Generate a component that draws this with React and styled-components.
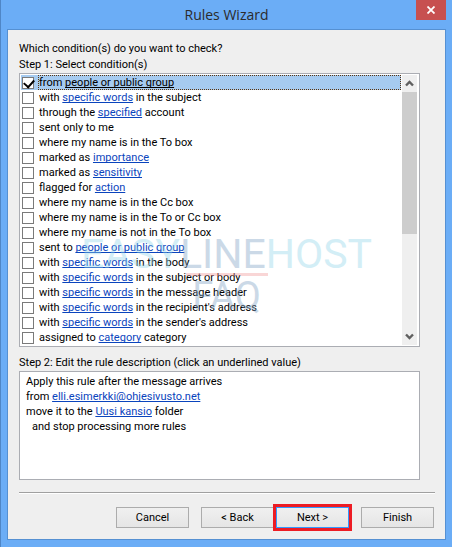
import React, { useState } from 'react'
import styled, { createGlobalStyle } from 'styled-components'

const conditions = [
    ['from ', 'people or public group', ''],
    ['with ', 'specific words', ' in the subject'],
    ['through the ', 'specified', ' account'],
    ['sent only to me'],
    ['where my name is in the To box'],
    ['marked as ', 'importance', ''],
    ['marked as ', 'sensitivity', ''],
    ['flagged for ', 'action', ''],
    ['where my name is in the Cc box'],
    ['where my name is in the To or Cc box'],
    ['where my name is not in the To box'],
    ['sent to ', 'people or public group', ''],
    ['with ', 'specific words', ' in the body'],
    ['with ', 'specific words', ' in the subject or body'],
    ['with ', 'specific words', ' in the message header'],
    ['with ', 'specific words', " in the recipient's address"],
    ['with ', 'specific words', " in the sender's address"],
    ['assigned to ', 'category', ' category'],
];

const App = () => {

    const [checked, setChecked] = useState([0]);

    const toggle = (index) => {
        if(checked.includes(index)) {
            setChecked(checked.filter((i) => i !== index));
        } else {
            setChecked([...checked, index]);
        }
    }

    return (
        <>
            <GlobalStyle />
            <Window>
                <TitleBar>
                    <Title>Rules Wizard</Title>
                    <CloseButton type="button" aria-label="Close">
                        <svg width="8" height="8" viewBox="0 0 8 8">
                            <path d="M0.5 0.5L7.5 7.5M7.5 0.5L0.5 7.5" stroke="#fff" strokeWidth="1.8" />
                        </svg>
                    </CloseButton>
                </TitleBar>
                <Panel>
                    <Fields>
                        <Label>Which condition(s) do you want to check?</Label>
                        <Label>Step 1: Select condition(s)</Label>
                        <ListBox>
                            <List>
                                {conditions.map(([before, link, after], index) => (
                                    <Row key={index} $selected={index === 0}>
                                        <Check
                                            type="checkbox"
                                            id={`condition-${index}`}
                                            checked={checked.includes(index)}
                                            onChange={() => toggle(index)}
                                        />
                                        <RowLabel htmlFor={`condition-${index}`} $selected={index === 0}>
                                            {before}
                                            {link && <Link href="#" $selected={index === 0}>{link}</Link>}
                                            {after}
                                        </RowLabel>
                                    </Row>
                                ))}
                            </List>
                            <ScrollBar>
                                <ScrollButton type="button" aria-label="Scroll up">
                                    <svg width="9" height="7" viewBox="0 0 9 7">
                                        <path d="M1 5.5L4.5 2L8 5.5" fill="none" stroke="#606060" strokeWidth="2.4" />
                                    </svg>
                                </ScrollButton>
                                <Track>
                                    <Thumb />
                                </Track>
                                <ScrollButton type="button" aria-label="Scroll down">
                                    <svg width="9" height="7" viewBox="0 0 9 7">
                                        <path d="M1 1.5L4.5 5L8 1.5" fill="none" stroke="#606060" strokeWidth="2.4" />
                                    </svg>
                                </ScrollButton>
                            </ScrollBar>
                        </ListBox>
                        <StepLabel>Step 2: Edit the rule description (click an underlined value)</StepLabel>
                        <Description>
                            <Line>Apply this rule after the message arrives</Line>
                            <Line>from <Link href="#">elli.esimerkki@ohjesivusto.net</Link></Line>
                            <Line>move it to the <Link href="#">Uusi kansio</Link> folder</Line>
                            <Line $indent>and stop processing more rules</Line>
                        </Description>
                    </Fields>
                    <Separator />
                    <Buttons>
                        <Button type="button">Cancel</Button>
                        <Pair>
                            <Button type="button">&lt; Back</Button>
                            <Button type="button" $primary>Next &gt;</Button>
                        </Pair>
                        <Button type="button">Finish</Button>
                    </Buttons>
                    <Watermark>
                        <Brand>
                            <Tint>EASY</Tint>LINE<Tint>HOST</Tint>
                        </Brand>
                        <Faq>FAQ</Faq>
                    </Watermark>
                </Panel>
            </Window>
        </>
    )
}

const GlobalStyle = createGlobalStyle`
    * {
        box-sizing: border-box;
    }
    body {
        margin: 0;
        font-family: Roboto, sans-serif;
        font-size: 11px;
        line-height: 15px;
        color: #000;
    }
    button, input {
        font: inherit;
        margin: 0;
        padding: 0;
    }
`;

const Window = styled.div`
    min-height: 100vh;
    display: flex;
    flex-direction: column;
    padding: 0 6px 7px;
    background: #6badf6;
    border-left: 1px solid #4f86c6;
    border-bottom: 1px solid #4f86c6;
`;

const TitleBar = styled.header`
    height: 29px;
    display: grid;
    grid-template-columns: 30px 1fr 30px;
`;

const Title = styled.h1`
    grid-column: 2;
    margin: 0;
    text-align: center;
    font-family: 'Open Sans', sans-serif;
    font-weight: 400;
    font-size: 14px;
    line-height: 29px;
    color: #2b2b2b;
`;

const CloseButton = styled.button`
    height: 20px;
    display: flex;
    justify-content: center;
    align-items: center;
    border: 0;
    background: #c75050;
`;

const Panel = styled.main`
    position: relative;
    flex: 1;
    padding: 11px 10px 11px 11px;
    background: #efefef;
    border: 1px solid #5590d2;
`;

const Fields = styled.div`
    padding-right: 15px;
`;

const Label = styled.p`
    margin: 0;
    line-height: 16px;
`;

const StepLabel = styled.p`
    margin: 0;
    padding-top: 8px;
    line-height: 16px;
`;

const ListBox = styled.div`
    display: flex;
    padding: 1px;
    gap: 1px;
    background: #fff;
    border: 1px solid #abadb3;
`;

const List = styled.ul`
    flex: 1;
    margin: 0;
    padding: 0;
    list-style: none;
`;

const Row = styled.li`
    height: 15px;
    display: flex;
    align-items: center;
    gap: 4px;
    padding-left: 1px;
    background: ${(props) => props.$selected ? '#a6cbf0' : 'transparent'};
`;

const Check = styled.input`
    appearance: none;
    flex: none;
    width: 12px;
    height: 12px;
    background: #fff;
    border: 1px solid #7a7a7a;
    &:checked::before {
        content: '';
        display: block;
        width: 8px;
        height: 5px;
        margin: 1px;
        border: solid #000;
        border-width: 0 0 2px 2px;
        transform: rotate(-48deg);
    }
`;

const RowLabel = styled.label`
    flex: 1;
    height: 15px;
    line-height: 16px;
    white-space: nowrap;
    outline: ${(props) => props.$selected ? '1px dotted #59340f' : 'none'};
    outline-offset: -1px;
    padding-left: 1px;
`;

const Link = styled.a`
    color: ${(props) => props.$selected ? '#000' : '#0a44bd'};
    text-decoration: underline;
    text-underline-offset: 1px;
    text-decoration-skip-ink: none;
`;

const ScrollBar = styled.div`
    width: 16px;
    display: flex;
    flex-direction: column;
    background: #efefef;
    border-right: 1px solid #fff;
`;

const ScrollButton = styled.button`
    height: 17px;
    display: flex;
    justify-content: center;
    align-items: center;
    border: 0;
    background: transparent;
`;

const Track = styled.div`
    flex: 1;
`;

const Thumb = styled.div`
    height: 60%;
    background: #cdcdcd;
`;

const Description = styled.div`
    min-height: 109px;
    padding: 2px 6px;
    background: #fff;
    border: 1px solid #abadb3;
`;

const Line = styled.p`
    margin: 0;
    padding-left: ${(props) => props.$indent ? '6px' : '0'};
`;

const Separator = styled.hr`
    margin: 12px 0 13px;
    height: 2px;
    border: 0;
    border-top: 1px solid #a0a0a0;
    background: #fff;
`;

const Buttons = styled.div`
    display: flex;
    justify-content: flex-end;
    gap: 12px;
    padding-right: 1px;
`;

const Pair = styled.div`
    display: flex;
    gap: 2px;
`;

const Button = styled.button`
    width: 73px;
    height: 21px;
    color: #000;
    background: linear-gradient(#f0f0f0, #e5e5e5);
    border: 1px solid ${(props) => props.$primary ? '#3399ff' : '#acacac'};
    outline: ${(props) => props.$primary ? '3px solid #ed1c24' : 'none'};
`;

const Watermark = styled.div`
    position: absolute;
    top: 206px;
    left: 0;
    right: 0;
    display: flex;
    flex-direction: column;
    align-items: center;
    color: #7fa3c4;
    opacity: 0.4;
    pointer-events: none;
`;

const Brand = styled.span`
    font-size: 41px;
    line-height: 37px;
`;

const Tint = styled.span`
    color: #93d5ea;
`;

const Faq = styled.span`
    width: 82px;
    text-align: center;
    font-size: 38px;
    line-height: 40px;
    border-top: 3px solid #f29a9a;
`;

export default App
